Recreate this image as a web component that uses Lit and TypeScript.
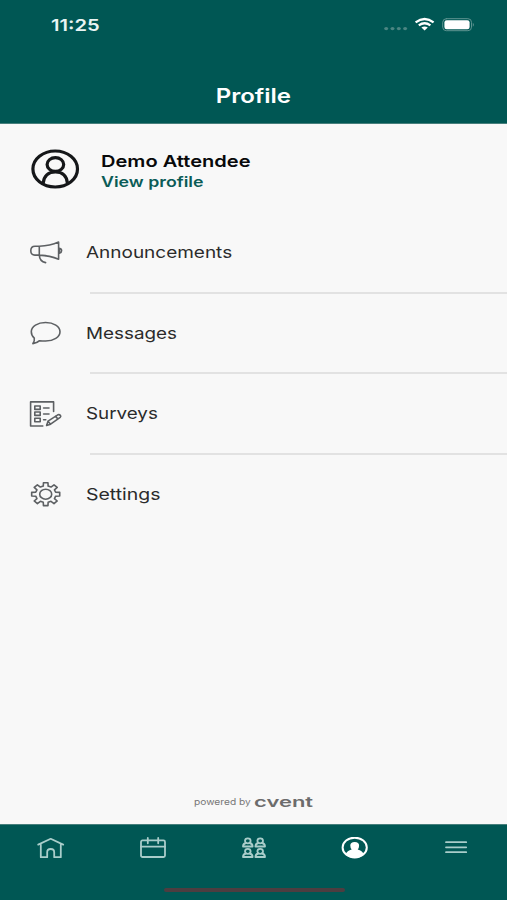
import { LitElement, html, css, svg } from "lit";
import { customElement } from "lit/decorators.js";

const megaphone = svg`<path d="M11.3 8.2H7Q2.8 8.2 2.8 12.7T7 17.1H11.3M11.3 8.2Q22 7.8 30.6 4V21.2Q22 17.6 11.3 17.1ZM11.3 17.1Q11.6 23.4 17.6 24.6"/><path d="M31.4 10.4Q33.6 10.8 33.6 12.7T31.4 15.2Z"/>`;
const bubble = svg`<path d="M17.6 3.5C25.6 3.5 32 7.3 32 12.7S25.6 22 17.6 22Q14 22 11.6 21.7Q9 24.2 4.9 24.6Q6.8 22.2 6.3 19.2Q3.3 16.5 3.3 12.7C3.3 7.3 9.6 3.5 17.6 3.5Z"/>`;
const survey = svg`<path d="M25.6 12.5V2.9H2.6V27H14.8M6.8 7H12.2V10.4H6.8ZM6.8 13H12.2V16.4H6.8ZM6.8 19.3H12.2V22.7H6.8ZM15.6 9H21M15.6 15H21M15.6 20.8H17.8M18.6 26.4L20 22.2L29.8 15.8Q31.2 15.2 32.4 16.3Q33.2 17.5 32.2 18.3L22.6 25.2ZM20 22.2L22.6 25.2M27.4 17.4L29.9 19.9"/>`;
const teeth = (() => {
  const pts: string[] = [];
  for (let i = 0; i < 8; i++) {
    for (const [off, r] of [[-0.24, 0.72], [-0.16, 1], [0.16, 1], [0.24, 0.72]]) {
      const a = (i * Math.PI) / 4 + off;
      pts.push(`${(17.7 + Math.sin(a) * 14.2 * r).toFixed(2)},${(14.2 - Math.cos(a) * 11.6 * r).toFixed(2)}`);
    }
  }
  return pts.join(" ");
})();
const gear = svg`<polygon points=${teeth}/><ellipse cx="17.7" cy="14.2" rx="6" ry="5"/>`;

const rows = [
  { label: "Announcements", icon: megaphone, name: "announcements" },
  { label: "Messages", icon: bubble, name: "messages" },
  { label: "Surveys", icon: survey, name: "surveys" },
  { label: "Settings", icon: gear, name: "settings" },
];

const person = (x: number, y: number) => svg`<g transform="translate(${x} ${y})"><ellipse cx="5" cy="3" rx="2.8" ry="2.5"/><path d="M3.1 5.2Q.2 5.8 .2 8.7H9.8Q9.8 5.8 6.9 5.2"/></g>`;

const tabs = [
  svg`<path d="M2.2 7.6L14.7 1.8L27.2 7.6M4.8 7V20.2H11.2V15.3Q11.2 12 14.7 12T18.2 15.3V20.2H24.8V7"/>`,
  svg`<rect x="4" y="3.4" width="24" height="16.6" rx="1.5"/><path d="M4 9.7H28M10.8 1V6.3M21.2 1V6.3"/>`,
  svg`${person(3.8, 0.8)}${person(16.2, 0.8)}${person(3.8, 11.3)}${person(16.2, 11.3)}`,
  svg`<ellipse class="ring" cx="14.7" cy="10.6" rx="12.1" ry="9.9"/><path class="solid" d="M10.3 8.4Q10.3 4.9 14.7 4.9T19.1 8.4Q19.1 11 17.7 12.4Q22.2 13.4 24 17.4Q20 21 14.7 21T5.4 17.4Q7.2 13.4 11.7 12.4Q10.3 11 10.3 8.4Z"/>`,
  svg`<path d="M5 5.2H25.2M5 10.3H25.2M5 15.2H25.2"/>`,
];

@customElement("app-root")
export class AppRoot extends LitElement {
  static styles = css`
    :host { display: flex; flex-direction: column; height: 900px; background: #f8f8f8; font-family: Inter, "Liberation Sans", sans-serif; color: #2b2b2b; overflow: hidden; }
    svg { display: block; fill: none; stroke-linejoin: round; stroke-linecap: round; }
    .wide { display: block; white-space: nowrap; transform: scaleX(1.2); transform-origin: left center; }
    header { height: 124px; box-sizing: border-box; background: #005754; color: #fff; border-bottom: 1px solid #477f7c; display: flex; flex-direction: column; flex: none; }
    .status { height: 48px; display: flex; justify-content: space-between; padding: 0 32px 0 51px; align-items: center; }
    .clock { font-size: 16.5px; font-weight: 600; color: #e9f4f3; padding-top: 1px; transform: scaleX(1.22); }
    .title { height: 48px; margin-top: 24px; display: flex; align-items: center; justify-content: center; font-size: 20px; font-weight: 600; }
    .title .wide { transform-origin: center; }
    .user { height: 89px; display: flex; padding: 25px 0 0 30px; box-sizing: border-box; flex: none; }
    .avatar { stroke: #151719; stroke-width: 3.2; }
    .who { padding: 2px 0 0 20.5px; }
    .name { font-size: 16.5px; line-height: 20px; font-weight: 600; color: #08090a; transform: scaleX(1.216); }
    .view { font-size: 14.5px; line-height: 21px; font-weight: 600; color: #0b5c57; transform: scaleX(1.224); }
    .row { display: flex; height: 80.7px; padding-left: 28px; flex: none; }
    .row svg { margin-top: 25px; stroke: #5d6063; stroke-width: 1.6; flex: none; }
    .cell { flex: 1; margin-left: 26px; display: flex; align-items: center; }
    .label { font-size: 16.5px; margin: -1px 0 0 -4px; transform: scaleX(1.15); }
    .messages { transform: scaleX(1.142); margin-top: 0; }
    .surveys { transform: scaleX(1.14); }
    .settings { transform: scaleX(1.18); margin-top: -2px; }
    .row:not(:last-child) .cell { border-bottom: 2px solid #e2e2e2; }
    .powered { margin-top: auto; height: 45px; display: flex; align-items: center; padding-left: 194px; color: #777; gap: 13px; }
    .by { font-size: 8.5px; padding-top: 1px; }
    .brand { font-size: 14px; font-weight: 600; color: #6c6c6c; transform: scaleX(1.57); }
    nav { height: 76px; background: #005754; border-top: 1px solid #477f7c; box-sizing: border-box; flex: none; display: flex; flex-direction: column; }
    .tabs { display: flex; padding-top: 12px; height: 63px; box-sizing: border-box; }
    .tab { flex: 1; display: flex; justify-content: center; }
    .tab svg { stroke: #a9cdca; stroke-width: 1.8; }
    .tab .ring { stroke: #fff; stroke-width: 2; }
    .tab .solid { fill: #fff; stroke: none; }
    .home { width: 181px; height: 4px; border-radius: 2px; background: #4d3d40; margin-left: 164px; }
  `;

  render() {
    return html`
      <header>
        <div class="status">
          <span class="wide clock">11:25</span>
          <svg width="92" height="22" viewBox="0 0 92 22">
            <g fill="#4b8582"><ellipse cx="3.2" cy="15.6" rx="2" ry="1.7"/><ellipse cx="9.5" cy="15.6" rx="2" ry="1.7"/><ellipse cx="15.8" cy="15.6" rx="2" ry="1.7"/><ellipse cx="22.1" cy="15.6" rx="2" ry="1.7"/></g>
            <g stroke="#fff" stroke-width="2.3" stroke-linecap="butt"><path d="M32.6 9.4Q41.6 2.7 50.6 9.4M35.8 12.4Q41.6 8.2 47.4 12.4"/></g>
            <path d="M38.4 14.6Q41.6 12.4 44.8 14.6L41.6 17.6Z" fill="#fff"/>
            <rect x="59.7" y="5.7" width="28.8" height="12" rx="3.6" stroke="#5e9491"/>
            <rect x="61.4" y="7.2" width="25.2" height="9" rx="2.3" fill="#fff"/><path d="M89.8 9.7Q92 11.7 89.8 13.7Z" fill="#5e9491"/>
          </svg>
        </div>
        <div class="title"><span class="wide">Profile</span></div>
      </header>
      <div class="user">
        <svg class="avatar" width="50" height="41" viewBox="0 0 50 41"><ellipse cx="25.2" cy="20" rx="22.3" ry="18"/><ellipse cx="25.4" cy="15.5" rx="8.3" ry="6.9"/><path d="M13.2 34.2Q14.4 23 25.4 23T37.4 34.2"/></svg>
        <div class="who"><span class="wide name">Demo Attendee</span><span class="wide view">View profile</span></div>
      </div>
      <main>
        ${rows.map((r) => html`<div class="row"><svg width="36" height="30" viewBox="0 0 36 30">${r.icon}</svg><div class="cell"><span class="wide label ${r.name}">${r.label}</span></div></div>`)}
      </main>
      <div class="powered"><span class="wide by">powered by</span><span class="wide brand">cvent</span></div>
      <nav>
        <div class="tabs">${tabs.map((t) => html`<div class="tab"><svg width="30" height="23" viewBox="0 0 30 23">${t}</svg></div>`)}</div>
        <div class="home"></div>
      </nav>`;
  }
}
